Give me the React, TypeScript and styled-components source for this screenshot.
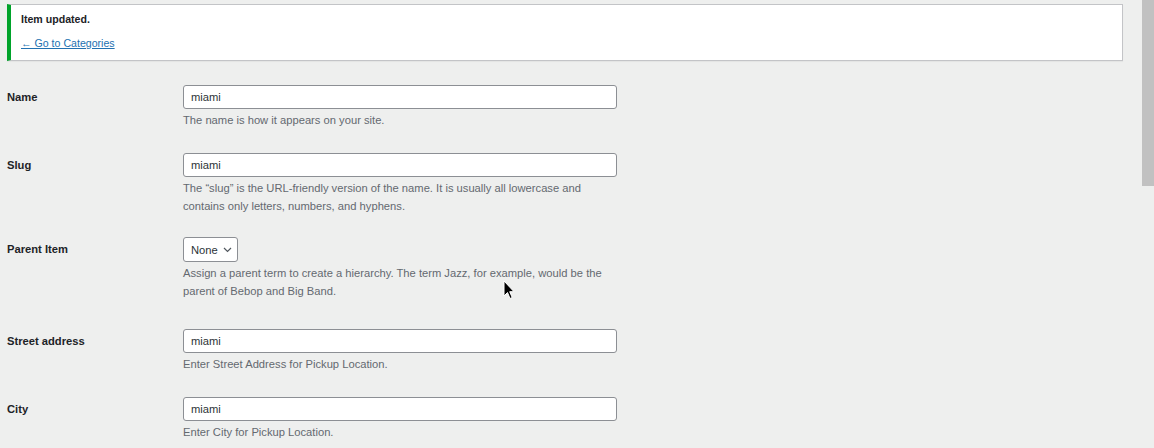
import React from "react";
import styled, { createGlobalStyle } from "styled-components";

const Global = createGlobalStyle`
  html, body { margin: 0; padding: 0; height: 448px; overflow: hidden; background: #eeefee; }
  body { font-family: "Liberation Sans", Arial, sans-serif; color: #1d2327; }
`;

const Shell = styled.div`
  display: flex;
  height: 448px;
  position: relative;
`;

const Main = styled.div`
  flex: 1;
  padding: 4px 19px 0 7px;
  min-width: 0;
`;

const ScrollTrack = styled.div`
  width: 12px;
  background: #eeefee;
  display: flex;
  flex-direction: column;
`;

const ScrollThumb = styled.div`
  height: 186px;
  background: #c1c1c1;
`;

const Notice = styled.div`
  box-sizing: border-box;
  background: #fff;
  border: 1px solid #c3c4c7;
  border-left: 4px solid #00a32a;
  padding: 2px 10px 0 10px;
  height: 57px;
  box-shadow: 0 1px 1px rgba(0, 0, 0, 0.04);
`;

const NoticeTitle = styled.p`
  margin: 4px 0 0;
  font-size: 10.6px;
  font-weight: bold;
  line-height: 16px;
`;

const NoticeLink = styled.a`
  display: inline-block;
  margin-top: 8px;
  font-size: 10.6px;
  line-height: 16px;
  color: #2271b1;
  text-decoration: underline;
`;

const Form = styled.div`
  display: flex;
  flex-direction: column;
  padding-top: 12px;
`;

const Row = styled.div<{ $extra?: number }>`
  display: grid;
  grid-template-columns: 176px 434px;
  padding: 12px 0 ${(p) => 11.5 + (p.$extra ?? 0)}px;
`;

const Label = styled.label<{ $h: number }>`
  font-size: 11.2px;
  font-weight: bold;
  line-height: ${(p) => p.$h}px;
  color: #1d2327;
`;

const Field = styled.div`
  display: flex;
  flex-direction: column;
  align-items: flex-start;
  gap: 3px;
`;

const TextInput = styled.div`
  box-sizing: border-box;
  width: 434px;
  height: 24px;
  border: 1px solid #8c8f94;
  border-radius: 3px;
  background: #fff;
  padding: 0 7px;
  font-size: 11.2px;
  line-height: 22px;
  color: #2c3338;
`;

const Select = styled.div`
  box-sizing: border-box;
  height: 25px;
  border: 1px solid #8c8f94;
  border-radius: 3px;
  background: #fff;
  padding: 0 5px 0 7px;
  display: flex;
  align-items: center;
  gap: 5px;
  font-size: 11.2px;
  color: #2c3338;
`;

const Desc = styled.p`
  margin: 0;
  width: 434px;
  font-size: 11.2px;
  line-height: 17.5px;
  color: #646970;
`;

const Cursor = styled.svg`
  position: absolute;
  left: 503px;
  top: 280px;
  pointer-events: none;
`;

type Item = { label: string; value: string; desc: string; extra?: number };

const Chevron = () => (
  <svg width="9" height="6" viewBox="0 0 9 6">
    <path d="M1 1l3.5 3.5L8 1" fill="none" stroke="#50575e" strokeWidth="1.2" />
  </svg>
);

export default function App() {
  const top: Item[] = [
    { label: "Name", value: "miami", desc: "The name is how it appears on your site." },
    {
      label: "Slug",
      value: "miami",
      extra: -1.5,
      desc: "The \u201cslug\u201d is the URL-friendly version of the name. It is usually all lowercase and contains only letters, numbers, and hyphens.",
    },
  ];
  const bottom: Item[] = [
    { label: "Street address", value: "miami", desc: "Enter Street Address for Pickup Location." },
    { label: "City", value: "miami", desc: "Enter City for Pickup Location." },
  ];
  return (
    <>
      <Global />
      <Shell>
        <Main>
          <Notice>
            <NoticeTitle>Item updated.</NoticeTitle>
            <NoticeLink href="#">&larr; Go to Categories</NoticeLink>
          </Notice>
          <Form>
            {top.map((it) => (
              <Row key={it.label} $extra={it.extra}>
                <Label $h={24}>{it.label}</Label>
                <Field>
                  <TextInput>{it.value}</TextInput>
                  <Desc>{it.desc}</Desc>
                </Field>
              </Row>
            ))}
            <Row $extra={5.5}>
              <Label $h={25}>Parent Item</Label>
              <Field>
                <Select>
                  None <Chevron />
                </Select>
                <Desc>
                  Assign a parent term to create a hierarchy. The term Jazz, for example, would be the parent of Bebop and Big Band.
                </Desc>
              </Field>
            </Row>
            {bottom.map((it) => (
              <Row key={it.label}>
                <Label $h={24}>{it.label}</Label>
                <Field>
                  <TextInput>{it.value}</TextInput>
                  <Desc>{it.desc}</Desc>
                </Field>
              </Row>
            ))}
          </Form>
        </Main>
        <ScrollTrack>
          <ScrollThumb />
        </ScrollTrack>
        <Cursor width="13" height="20" viewBox="0 0 13 20">
          <path d="M1 1v15l3.5-3.5 2.5 6 2.2-1-2.5-5.8H11z" fill="#000" stroke="#fff" strokeWidth="1" />
        </Cursor>
      </Shell>
    </>
  );
}
